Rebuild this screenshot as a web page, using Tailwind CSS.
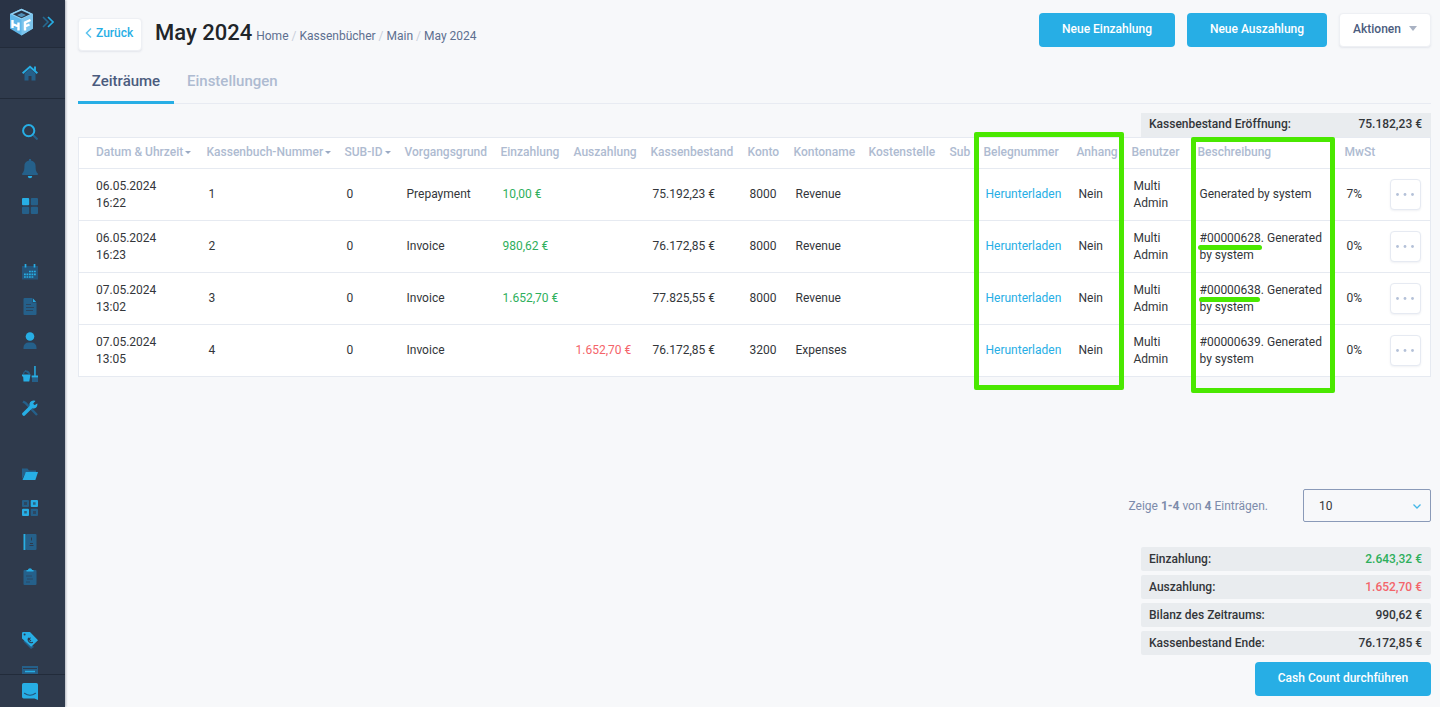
<!DOCTYPE html>
<html lang="de">
<head>
<meta charset="utf-8">
<meta name="viewport" content="width=device-width, initial-scale=1">
<title>May 2024 – Kassenbücher</title>
<script src="https://cdn.jsdelivr.net/npm/@tailwindcss/browser@4"></script>
</head>
<body class="bg-[#f7f8fa] font-['Roboto',sans-serif] text-xs text-[#33363a]">
<div class="flex h-screen">

  <!-- Sidebar -->
  <aside class="flex w-[65px] shrink-0 flex-col bg-[#2f3a4c] text-[#27aee5] shadow-[1px_0_2px_rgba(47,58,76,0.35)]">
    <div class="flex h-12 shrink-0 items-center gap-2 border-b border-[#222b3a] bg-[#293345] pl-[9px] pb-1">
      <a href="#" aria-label="Startseite">
        <svg class="h-7 w-[25px]" viewBox="0 0 25 28">
          <path d="M12.500 .8 24 6v14.500L12.500 27.500 1 20.500V6z" fill="#5fb6e8"/>
          <path d="M12.500 .8 24 6 12.500 11.500 1 6z" fill="#8fd0f3"/>
          <path d="M12.500 2.400 21 6.200 12.500 10.200 4 6.200z" fill="#293345"/>
          <path d="M12.500 5 17 7 12.500 9.200 8 7z" fill="#4f8fb8"/>
          <path d="M12.500 11.500 24 6v14.500L12.500 27.500z" fill="#7cc4ec"/>
          <path d="M3.500 12v8M9.500 14.500v8M3.500 16 9.500 18.500M16 22.500v-8L21.500 12M16 18.500 20.500 16.500" fill="none" stroke="#fff" stroke-width="2.400"/>
        </svg>
      </a>
      <button type="button" aria-label="Menü erweitern">
        <svg class="h-3 w-3" viewBox="0 0 12 12" fill="none" stroke-width="1.600"><path d="M1 1l5 5-5 5" stroke="#25688f"/><path d="M6 1l5 5-5 5" stroke="#27aee5"/></svg>
      </button>
    </div>
    <a href="#" aria-label="Home" class="flex h-[51px] shrink-0 items-center border-b border-[#222b3a] pl-[22px]">
      <svg class="size-4" viewBox="0 0 16 16"><path d="M2.500 8.500 8 3.800l5.500 4.700V15.500h-4V11h-3v4.500h-4z" fill="#25608a"/><path d="M.6 8.300 8 1.800l7.400 6.500M13 1.500v4" fill="none" stroke="#27aee5" stroke-width="1.900"/></svg>
    </a>
    <nav aria-label="Hauptmenü" class="flex min-h-0 flex-1 flex-col overflow-hidden pt-[14px]">
      <a href="#" aria-label="Suche" class="flex h-[37px] shrink-0 items-center pl-[22px]">
        <svg class="size-4" viewBox="0 0 16 16" fill="none"><path d="M11 11l4.500 4.500" stroke="#25608a" stroke-width="2"/><circle cx="6.700" cy="6.700" r="5.600" stroke="#27aee5" stroke-width="2"/></svg>
      </a>
      <a href="#" aria-label="Benachrichtigungen" class="flex h-[37px] shrink-0 items-center pl-[22px]">
        <svg class="h-5 w-4" viewBox="0 0 16 20"><path d="M7 0h2v1.600c3 .5 4.600 2.700 4.600 5.600 0 4.600.9 6 2.200 7.200.4.700 0 1.600-.9 1.600H1.100c-.9 0-1.300-.9-.9-1.600C1.500 13.200 2.400 11.800 2.400 7.200 2.400 4.300 4 2.100 7 1.600z" fill="#25608a"/><path d="M5.800 17h4.400a2.200 2.200 0 0 1-4.400 0z" fill="#27aee5"/></svg>
      </a>
      <a href="#" aria-label="Übersicht" class="flex h-[37px] shrink-0 items-center pl-[22px]">
        <svg class="size-4" viewBox="0 0 16 16" fill="#25608a"><rect width="7.200" height="7.200" rx="1" fill="#27aee5"/><rect x="8.800" width="7.200" height="7.200" rx="1"/><rect y="8.800" width="7.200" height="7.200" rx="1"/><rect x="8.800" y="8.800" width="7.200" height="7.200" rx="1"/></svg>
      </a>

      <a href="#" aria-label="Kalender" class="mt-[31px] flex h-[34px] shrink-0 items-center pl-[22px]">
        <svg class="size-4" viewBox="0 0 16 16"><path d="M0 2h16v13.500H0z" fill="#25547a"/><path d="M3.500 0v3.500M12.500 0v3.500" stroke="#27aee5" stroke-width="1.700"/><path d="M7 7.500h7.500M2 10.300h12.500M2 13h9.500" stroke="#27aee5" stroke-width="1.700" stroke-dasharray="1.800 .7"/></svg>
      </a>
      <a href="#" aria-label="Dokumente" class="flex h-[34px] shrink-0 items-center pl-[22px]">
        <svg class="h-[17px] w-4" viewBox="0 0 16 17"><path d="M2.500 0h8v4.500h4V16a1 1 0 0 1-1 1h-11a1 1 0 0 1-1-1V1a1 1 0 0 1 1-1z" fill="#25608a"/><path d="M4 6.500h5M4 9.500h8M4 12.500h7" stroke="#2f3a4c" stroke-opacity=".7"/><path d="M11 .6 14.200 4H11z" fill="#27aee5"/></svg>
      </a>
      <a href="#" aria-label="Gäste" class="flex h-[34px] shrink-0 items-center pl-[22px]">
        <svg class="h-[17px] w-4" viewBox="0 0 16 17"><path d="M1.500 17v-1.500a5 5 0 0 1 5-5h3a5 5 0 0 1 5 5V17z" fill="#25608a"/><circle cx="8" cy="4.500" r="4.300" fill="#27aee5"/></svg>
      </a>
      <a href="#" aria-label="Reinigung" class="flex h-[34px] shrink-0 items-center pl-[22px]">
        <svg class="size-4" viewBox="0 0 16 16"><path d="M1.500 8C2 4 7 4 7.500 8M3 4.500l4 3" fill="none" stroke="#25608a" stroke-width="1.200"/><path d="M0 8.500h8.500L7.300 15.500H1.500L1.200 11 0 10z" fill="#27aee5"/><path d="M10 11.500h6V16h-6z" fill="#25608a"/><path d="M12.200 0h1.500v9.500H16v2h-6.300v-2h2.500z" fill="#27aee5"/></svg>
      </a>
      <a href="#" aria-label="Wartung" class="flex h-[34px] shrink-0 items-center pl-[22px]">
        <svg class="size-4" viewBox="0 0 16 16" fill="none"><path d="M1 1.500 3.500 3 15 15" stroke="#25608a" stroke-width="2.400"/><path d="M1.900 14.100 9.500 6.500" stroke="#27aee5" stroke-width="3.500" stroke-linecap="round"/><path d="M12.800 1.400A3.400 3.400 0 1 0 14.800 4.300L12 5.200 10.700 3.800z" fill="#27aee5" stroke="#27aee5" stroke-width="1.200"/><path d="M13.900.7 11.400 3.200l.4 1.300 1.300.4L15.700 2.300z" fill="#2f3a4c"/></svg>
      </a>

      <a href="#" aria-label="Ordner" class="mt-8 flex h-[34px] shrink-0 items-center pl-[22px]">
        <svg class="size-4" viewBox="0 0 16 16"><path d="M0 2.500h5.500l1.500 2h7V7H3.500L0 13z" fill="#25608a"/><path d="M3.800 6H16l-2.600 8H.5z" fill="#27aee5"/></svg>
      </a>
      <a href="#" aria-label="Apps" class="flex h-[34px] shrink-0 items-center pl-[22px]">
        <svg class="size-4" viewBox="0 0 16 16" fill="#25608a"><rect width="7" height="7" rx="1"/><rect x="8.700" width="7.300" height="7" rx="1" fill="#27aee5"/><rect y="8.700" width="7" height="7.300" rx="1" fill="#27aee5"/><rect x="8.700" y="8.700" width="7.300" height="7.300" rx="1"/><path d="M2 2h3v3H2zM11 2.200h2.600v2.600H11zM2.200 11h2.600v2.600H2.200zM11 11h3v3h-3z" fill="#2f3a4c" fill-opacity=".65"/></svg>
      </a>
      <a href="#" aria-label="Kassenbücher" class="flex h-[34px] shrink-0 items-center pl-[22px]">
        <svg class="size-4" viewBox="0 0 16 16"><rect x="4" width="10.500" height="16" rx="1" fill="#25608a"/><path d="M1.500 0h2v16h-2z" fill="#27aee5"/><path d="M9.500 3.500v3M7.500 11.500h4M8 9.500h3" stroke="#2f3a4c"/></svg>
      </a>
      <a href="#" aria-label="Berichte" class="flex h-[34px] shrink-0 items-center pl-[22px]">
        <svg class="h-[18px] w-4" viewBox="0 0 16 18"><rect x="1.500" y="3" width="13" height="15" rx="1" fill="#25608a"/><path d="M4 9h6M5 12h6M4 15h4" stroke="#2f3a4c" stroke-opacity=".6"/><path d="M4.500 4.500V3h1.300a2.300 2.300 0 0 1 4.400 0h1.300v1.500z" fill="#27aee5"/></svg>
      </a>

      <a href="#" aria-label="Preise" class="mt-[30px] flex h-[34px] shrink-0 items-center pl-[22px]">
        <svg class="h-[17px] w-4" viewBox="0 0 16 17"><path d="M1.500 9.500 9 17l3-2-9-9z" fill="#25608a"/><path d="M0 1.200A1.200 1.200 0 0 1 1.200 0H8l8 8.200-6.800 6.600L0 6.500z" fill="#27aee5"/><circle cx="2.600" cy="2.600" r="1" fill="#2f3a4c"/><path d="M6 6.200 9 9.200M5.800 8.500 8.500 5.700M10.900 10.300c-3 1.600-6-1.600-4.300-4.500" fill="none" stroke="#2f3a4c" stroke-width="1.100"/></svg>
      </a>
      <a href="#" aria-label="Kanäle" class="flex h-[34px] shrink-0 items-center pl-[22px]">
        <svg class="size-4" viewBox="0 0 16 16"><path d="M0 0h16v16H0z" fill="#25608a"/><path d="M1 2.500h14" stroke="#2f3a4c"/><path d="M3 5.500h10" stroke="#27aee5" stroke-width="1.500"/></svg>
      </a>
    </nav>
    <button type="button" aria-label="Chat" class="flex h-[33px] shrink-0 items-center border-t border-[#222b3a] bg-[#2f3a4c] pl-[22px]">
      <svg class="h-[17px] w-4" viewBox="0 0 16 17"><path d="M1.700 0h12.600A1.700 1.700 0 0 1 16 1.700V17l-3.500-1.500H1.700A1.700 1.700 0 0 1 0 13.800V1.700A1.700 1.700 0 0 1 1.700 0z" fill="#27aee5"/><path d="M2.500 10.300q5.500 4 11 0" fill="none" stroke="#25547a" stroke-width="1.100" stroke-linecap="round"/></svg>
    </button>
  </aside>

  <!-- Content -->
  <main class="flex min-w-0 flex-1 flex-col overflow-hidden pl-[13px] pr-[9px] pt-[13px]">
    <header class="flex items-start">
      <a href="#" class="mt-[5px] flex h-[33px] w-16 items-center gap-1 rounded-sm border border-[#eef0f4] bg-white px-[6px] pb-[3px] font-medium text-[#27aee5] shadow-[0_1px_2px_rgba(60,80,120,0.1)]">
        <svg class="h-3 w-[7px]" viewBox="0 0 7 12" fill="none" stroke="#5cc3ee" stroke-width="1.500"><path d="M6 1.500 1.500 6 6 10.500"/></svg>
        Zurück
      </a>
      <div class="ml-[13px] mt-[5px] flex items-baseline gap-1">
        <h1 class="text-[22px] leading-[30px] font-medium text-[#212529]">May 2024</h1>
        <nav aria-label="Brotkrumen" class="flex gap-[3px] text-[#5d6f90]">
          <a href="#">Home</a><span class="text-[#c9cfda]">/</span><a href="#">Kassenbücher</a><span class="text-[#c9cfda]">/</span><a href="#">Main</a><span class="text-[#c9cfda]">/</span><a href="#">May 2024</a>
        </nav>
      </div>
      <div class="ml-auto flex font-medium">
        <button type="button" class="h-[34px] w-[136px] rounded-sm bg-[#27aee5] pb-[3px] text-white">Neue Einzahlung</button>
        <button type="button" class="ml-3 h-[34px] w-[140px] rounded-sm bg-[#27aee5] pb-[3px] text-white">Neue Auszahlung</button>
        <button type="button" class="ml-3 flex h-[34px] w-[92px] items-center justify-center gap-2 rounded-sm border border-[#eef0f4] bg-white pb-[3px] text-[#4b5c7e] shadow-[0_1px_2px_rgba(60,80,120,0.1)]">Aktionen
          <svg class="h-[5px] w-2" viewBox="0 0 8 5"><path d="M0 0h8L4 5z" fill="#a9b2c3"/></svg>
        </button>
      </div>
    </header>

    <div role="tablist" class="mt-[14px] flex h-[39px] border-b border-[#e8ebf2] text-[15px] font-medium">
      <button type="button" role="tab" aria-selected="true" class="-mb-px h-[39px] w-24 border-b-3 border-[#27aee5] pb-[2px] text-[#4b5c7e]">Zeiträume</button>
      <button type="button" role="tab" aria-selected="false" class="ml-[13px] h-[39px] pb-[5px] text-[#aebbd1]">Einstellungen</button>
    </div>

    <dl class="mt-[9px] flex h-6 w-[290px] shrink-0 items-center justify-between self-end bg-[#e9ecef] pb-[2px] pl-2 pr-[9px] font-medium"><dt>Kassenbestand Eröffnung:</dt><dd>75.182,23 €</dd></dl>

    <section class="relative">
      <table class="w-full table-fixed border-collapse border border-[#e6eaf1] bg-white text-left leading-[17px] [&_td]:pl-[9px] [&_th]:pl-[7px] [&_td:first-child]:pl-[17px] [&_th:first-child]:pl-[17px] [&_tbody_tr]:h-[52px] [&_tbody_tr]:border-t [&_tbody_tr]:border-[#e6eaf1]">
        <colgroup>
          <col class="w-[121px]"><col class="w-[138px]"><col class="w-[60px]"><col class="w-[96px]"><col class="w-[73px]"><col class="w-[77px]"><col class="w-[97px]"><col class="w-[46px]"><col class="w-[75px]"><col class="w-[81px]"><col class="w-[34px]"><col class="w-[93px]"><col class="w-[55px]"><col class="w-[66px]"><col class="w-[147px]"><col class="w-[46px]"><col class="w-[47px]">
        </colgroup>
        <thead class="whitespace-nowrap text-[#aebbd1]">
          <tr class="h-[31px] [&>th]:pb-[2px] [&>th]:font-medium">
            <th><button type="button" class="flex items-center gap-[2px]">Datum &amp; Uhrzeit<svg class="h-[3px] w-[6px]" viewBox="0 0 6 3"><path d="M0 0h6L3 3z" fill="#9aaac4"/></svg></button></th>
            <th><button type="button" class="flex items-center gap-[2px]">Kassenbuch-Nummer<svg class="h-[3px] w-[6px]" viewBox="0 0 6 3"><path d="M0 0h6L3 3z" fill="#9aaac4"/></svg></button></th>
            <th><button type="button" class="flex items-center gap-[2px]">SUB-ID<svg class="h-[3px] w-[6px]" viewBox="0 0 6 3"><path d="M0 0h6L3 3z" fill="#9aaac4"/></svg></button></th>
            <th>Vorgangsgrund</th><th>Einzahlung</th><th>Auszahlung</th><th>Kassenbestand</th><th>Konto</th><th>Kontoname</th><th>Kostenstelle</th><th>Sub</th><th>Belegnummer</th><th>Anhang</th><th>Benutzer</th><th>Beschreibung</th><th>MwSt</th><th aria-label="Aktionen"></th>
          </tr>
        </thead>
        <tbody>
          <tr><td>06.05.2024<br>16:22</td><td>1</td><td>0</td><td>Prepayment</td><td class="text-[#2eaf5c]">10,00 €</td><td></td><td>75.192,23 €</td><td>8000</td><td>Revenue</td><td></td><td></td><td><a href="#" class="text-[#27aee5]">Herunterladen</a></td><td>Nein</td><td>Multi<br>Admin</td><td>Generated by system</td><td>7%</td>
            <td><button type="button" aria-label="Mehr" class="-ml-[3px] flex h-[31px] w-[31px] items-center justify-center rounded-sm border border-[#e6eaf2] bg-white shadow-[0_1px_2px_rgba(60,80,120,0.08)]"><svg class="h-[3px] w-[18px]" viewBox="0 0 18 3" fill="#b4c1d8"><circle cx="1.500" cy="1.500" r="1.400"/><circle cx="9" cy="1.500" r="1.400"/><circle cx="16.500" cy="1.500" r="1.400"/></svg></button></td></tr>
          <tr><td>06.05.2024<br>16:23</td><td>2</td><td>0</td><td>Invoice</td><td class="text-[#2eaf5c]">980,62 €</td><td></td><td>76.172,85 €</td><td>8000</td><td>Revenue</td><td></td><td></td><td><a href="#" class="text-[#27aee5]">Herunterladen</a></td><td>Nein</td><td>Multi<br>Admin</td><td>#00000628. Generated<br>by system</td><td>0%</td>
            <td><button type="button" aria-label="Mehr" class="-ml-[3px] flex h-[31px] w-[31px] items-center justify-center rounded-sm border border-[#e6eaf2] bg-white shadow-[0_1px_2px_rgba(60,80,120,0.08)]"><svg class="h-[3px] w-[18px]" viewBox="0 0 18 3" fill="#b4c1d8"><circle cx="1.500" cy="1.500" r="1.400"/><circle cx="9" cy="1.500" r="1.400"/><circle cx="16.500" cy="1.500" r="1.400"/></svg></button></td></tr>
          <tr><td>07.05.2024<br>13:02</td><td>3</td><td>0</td><td>Invoice</td><td class="text-[#2eaf5c]">1.652,70 €</td><td></td><td>77.825,55 €</td><td>8000</td><td>Revenue</td><td></td><td></td><td><a href="#" class="text-[#27aee5]">Herunterladen</a></td><td>Nein</td><td>Multi<br>Admin</td><td>#00000638. Generated<br>by system</td><td>0%</td>
            <td><button type="button" aria-label="Mehr" class="-ml-[3px] flex h-[31px] w-[31px] items-center justify-center rounded-sm border border-[#e6eaf2] bg-white shadow-[0_1px_2px_rgba(60,80,120,0.08)]"><svg class="h-[3px] w-[18px]" viewBox="0 0 18 3" fill="#b4c1d8"><circle cx="1.500" cy="1.500" r="1.400"/><circle cx="9" cy="1.500" r="1.400"/><circle cx="16.500" cy="1.500" r="1.400"/></svg></button></td></tr>
          <tr><td>07.05.2024<br>13:05</td><td>4</td><td>0</td><td>Invoice</td><td></td><td class="text-[#f4646a]">1.652,70 €</td><td>76.172,85 €</td><td>3200</td><td>Expenses</td><td></td><td></td><td><a href="#" class="text-[#27aee5]">Herunterladen</a></td><td>Nein</td><td>Multi<br>Admin</td><td>#00000639. Generated<br>by system</td><td>0%</td>
            <td><button type="button" aria-label="Mehr" class="-ml-[3px] flex h-[31px] w-[31px] items-center justify-center rounded-sm border border-[#e6eaf2] bg-white shadow-[0_1px_2px_rgba(60,80,120,0.08)]"><svg class="h-[3px] w-[18px]" viewBox="0 0 18 3" fill="#b4c1d8"><circle cx="1.500" cy="1.500" r="1.400"/><circle cx="9" cy="1.500" r="1.400"/><circle cx="16.500" cy="1.500" r="1.400"/></svg></button></td></tr>
        </tbody>
      </table>
      <!-- Highlight marks over the table -->
      <div class="pointer-events-none absolute -top-[5px] right-[307px] h-[258px] w-[150px] rounded-xs border-5 border-[#4ae800]"></div>
      <div class="pointer-events-none absolute top-0 right-[96px] h-[256px] w-[144px] rounded-xs border-5 border-[#4ae800]"></div>
      <div class="pointer-events-none absolute top-[108px] right-[169px] h-[5px] w-16 rounded-full bg-[#4ae800]"></div>
      <div class="pointer-events-none absolute top-[160px] right-[171px] h-[5px] w-[61px] rounded-full bg-[#4ae800]"></div>
    </section>

    <div class="mt-28 flex items-center justify-end gap-[35px]">
      <p class="text-[#7d8cab]">Zeige <b class="font-bold">1-4</b> von <b class="font-bold">4</b> Einträgen.</p>
      <div class="relative">
        <select aria-label="Einträge pro Seite" class="block h-[33px] w-32 appearance-none rounded-xs border border-[#8a9ab8] bg-transparent pl-[15px] text-[#33363a]"><option>10</option><option>25</option><option>50</option></select>
        <svg class="pointer-events-none absolute top-[15px] right-[10px] h-[5px] w-2" viewBox="0 0 8 5" fill="none" stroke="#45b8e8" stroke-width="1.300"><path d="M.5.500 4 4 7.500.500"/></svg>
      </div>
    </div>

    <dl class="mt-[25px] flex w-[290px] flex-col gap-1 self-end font-medium [&>div]:flex [&>div]:h-6 [&>div]:items-center [&>div]:justify-between [&>div]:rounded-xs [&>div]:bg-[#e9ecef] [&>div]:pl-2 [&>div]:pr-[9px]">
      <div><dt>Einzahlung:</dt><dd class="text-[#2eaf5c]">2.643,32 €</dd></div>
      <div><dt>Auszahlung:</dt><dd class="text-[#f4646a]">1.652,70 €</dd></div>
      <div><dt>Bilanz des Zeitraums:</dt><dd>990,62 €</dd></div>
      <div><dt>Kassenbestand Ende:</dt><dd>76.172,85 €</dd></div>
    </dl>
    <button type="button" class="mt-[7px] h-[34px] w-44 shrink-0 self-end rounded-sm bg-[#27aee5] pb-[2px] font-medium text-white">Cash Count durchführen</button>
  </main>
</div>
</body>
</html>
